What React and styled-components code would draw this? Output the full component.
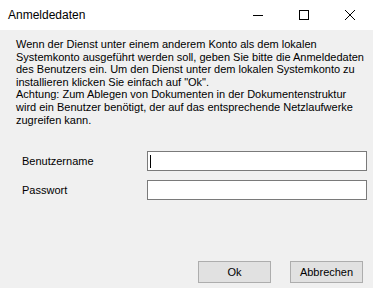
import React from 'react';
import styled, { createGlobalStyle } from 'styled-components';

const GlobalStyle = createGlobalStyle`
  html, body {
    margin: 0;
    padding: 0;
    background: #f0f0f0;
  }
  * {
    box-sizing: border-box;
  }
`;

const Window = styled.div`
  width: 373px;
  height: 288px;
  display: flex;
  flex-direction: column;
  background: #f0f0f0;
  font-family: "Liberation Sans", Arial, sans-serif;
  font-size: 11px;
  color: #000;
  overflow: hidden;
`;

const TitleBar = styled.div`
  height: 30px;
  flex: none;
  display: flex;
  align-items: center;
  background: #fff;
`;

const Title = styled.div`
  flex: 1;
  padding-left: 8px;
  font-size: 12px;
  color: #000;
`;

const CaptionButton = styled.div`
  width: 46px;
  height: 30px;
  display: flex;
  align-items: center;
  justify-content: center;
`;

const Body = styled.div`
  flex: 1;
  display: flex;
  flex-direction: column;
  padding: 8px 10px 5px 16px;
`;

const Info = styled.div`
  line-height: 12.6px;
  white-space: nowrap;
`;

const Form = styled.div`
  display: grid;
  grid-template-columns: 125px 220px;
  row-gap: 9px;
  align-items: center;
  margin-top: 25px;
  padding-left: 6px;
`;

const Label = styled.label`
  font-size: 11px;
`;

const Input = styled.div`
  height: 20px;
  background: #fff;
  border: 1px solid #7a7a7a;
  display: flex;
  align-items: center;
  padding-left: 2px;
`;

const Caret = styled.span`
  width: 1px;
  height: 13px;
  background: #000;
`;

const ButtonRow = styled.div`
  margin-top: auto;
  display: flex;
  justify-content: flex-end;
  gap: 19px;
`;

const Button = styled.button`
  width: 73px;
  height: 22px;
  background: #e1e1e1;
  border: 1px solid #adadad;
  font-family: "Liberation Sans", Arial, sans-serif;
  font-size: 11px;
  color: #000;
  padding: 0;
`;

const lines = [
  'Wenn der Dienst unter einem anderem Konto als dem lokalen',
  'Systemkonto ausgeführt werden soll, geben Sie bitte die Anmeldedaten',
  'des Benutzers ein. Um den Dienst unter dem lokalen Systemkonto zu',
  'installieren klicken Sie einfach auf "Ok".',
  'Achtung: Zum Ablegen von Dokumenten in der Dokumentenstruktur',
  'wird ein Benutzer benötigt, der auf das entsprechende Netzlaufwerke',
  'zugreifen kann.',
];

export default function App() {
  return (
    <>
      <GlobalStyle />
      <Window>
        <TitleBar>
          <Title>Anmeldedaten</Title>
          <CaptionButton>
            <svg width="12" height="12" viewBox="0 0 12 12">
              <line x1="1" y1="6.5" x2="11" y2="6.5" stroke="#000" strokeWidth="1" />
            </svg>
          </CaptionButton>
          <CaptionButton>
            <svg width="12" height="12" viewBox="0 0 12 12">
              <rect x="1.5" y="1.5" width="9" height="9" fill="none" stroke="#000" strokeWidth="1" />
            </svg>
          </CaptionButton>
          <CaptionButton>
            <svg width="12" height="12" viewBox="0 0 12 12">
              <path d="M1 1 L11 11 M11 1 L1 11" stroke="#000" strokeWidth="1" />
            </svg>
          </CaptionButton>
        </TitleBar>
        <Body>
          <Info>
            {lines.map((l, i) => (
              <div key={i}>{l}</div>
            ))}
          </Info>
          <Form>
            <Label>Benutzername</Label>
            <Input>
              <Caret />
            </Input>
            <Label>Passwort</Label>
            <Input />
          </Form>
          <ButtonRow>
            <Button>Ok</Button>
            <Button>Abbrechen</Button>
          </ButtonRow>
        </Body>
      </Window>
    </>
  );
}
